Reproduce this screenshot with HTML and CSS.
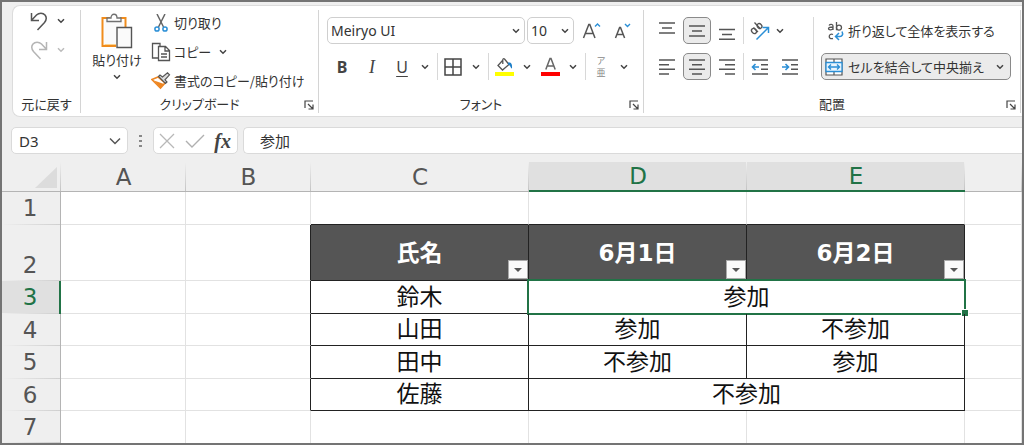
FILE: index.html
```html
<!DOCTYPE html>
<html lang="ja">
<head>
<meta charset="utf-8">
<title>参加表</title>
<link rel="stylesheet" href="styles.css">
</head>
<body>
<svg class="defs" aria-hidden="true">
  <symbol id="chev" viewBox="0 0 8 6"><path d="M1 1.3 4 4.3 7 1.3" fill="none" stroke="currentColor" stroke-width="1.5"/></symbol>
  <symbol id="launch" viewBox="0 0 10 10"><path d="M1 8V1h8M4 4l5 5M9 4.500V9H4.500" fill="none" stroke="#444" stroke-width="1.200"/></symbol>
</svg>
<main class="app">
  <div class="ribbon">
    <section class="group" aria-label="元に戻す">
      <div class="undo">
        <button class="b" aria-label="元に戻す"><svg width="18" height="20" viewBox="0 0 18 20"><path d="M1.500 2v7.500H9M1.800 9 6.500 4C9 1.500 13 1.500 15 4s1.500 5-.5 7.500L7.500 19" fill="none" stroke="#555" stroke-width="1.500"/></svg></button>
        <button class="b" aria-label="元に戻すの一覧"><svg class="chev"><use href="#chev"/></svg></button>
        <button class="b off" aria-label="やり直し"><svg width="18" height="20" viewBox="0 0 18 20"><path d="M16.500 2v7.500H9M16.200 9 11.500 4C9 1.500 5 1.500 3 4s-1.500 5 .5 7.500L10.500 19" fill="none" stroke="#b5b5b5" stroke-width="1.500"/></svg></button>
        <button class="b off" aria-label="やり直しの一覧"><svg class="chev"><use href="#chev"/></svg></button>
      </div>
      <footer class="foot"><span>元に戻す</span></footer>
    </section>

    <section class="group" aria-label="クリップボード">
      <div class="clip">
        <button class="b paste">
          <svg width="34" height="36" viewBox="0 0 34 36"><path d="M10 5H2.500v28H16M20 5h5.500v9" fill="none" stroke="#f08c1c" stroke-width="2"/><path d="M4.500 7h19v7H16v17H4.500z" fill="#fafafa"/><path d="M4.500 31.500H16" stroke="#fbd28e"/><path d="M7 8.500V5h4c0-5 6-5 6 0h4v3.500z" fill="#fff" stroke="#707070" stroke-width="1.300"/><path d="M17 14.500h14.500v20H17z" fill="#fafafa" stroke="#555" stroke-width="1.400"/></svg>
          <span>貼り付け</span>
          <svg class="chev"><use href="#chev"/></svg>
        </button>
        <div class="cliplist">
          <button class="b row"><svg width="20" height="18" viewBox="0 0 20 18"><path d="M6 0l6.500 13M14 0 7.500 13" fill="none" stroke="#666" stroke-width="1.500"/><circle cx="6" cy="15" r="2.100" fill="none" stroke="#2b8fd6" stroke-width="1.500"/><circle cx="14" cy="15" r="2.100" fill="none" stroke="#2b8fd6" stroke-width="1.500"/></svg><span>切り取り</span></button>
          <div class="row">
            <button class="b row"><svg width="20" height="20" viewBox="0 0 20 20"><path d="M7 16H1.500V1.500H9V4" fill="none" stroke="#555" stroke-width="1.300"/><path d="M7.500 4.500h7l4 4v10h-11zM14 4.500V9h4.500M10 12h6M10 15h6" fill="none" stroke="#555" stroke-width="1.300"/></svg><span>コピー</span></button>
            <button class="b" aria-label="コピーの一覧"><svg class="chev"><use href="#chev"/></svg></button>
          </div>
          <button class="b row"><svg width="20" height="18" viewBox="0 0 20 18"><path d="M7 5 1 7.500 9.500 16l4.500-5z" fill="#fff" stroke="#ee8622" stroke-width="1.600"/><path d="M3 8.500 13 12 9.500 16z" fill="#ee8622"/><path d="M7.500 4.500 9 3l2.500 2L16.500 .8l2 2-4.500 5 2 2.200-1.500 1.500z" fill="#ddd" stroke="#555" stroke-width="1.200"/></svg><span>書式のコピー/貼り付け</span></button>
        </div>
      </div>
      <footer class="foot"><span>クリップボード</span><button class="b launch" aria-label="クリップボードの詳細"><svg width="10" height="10"><use href="#launch"/></svg></button></footer>
    </section>

    <section class="group" aria-label="フォント">
      <div class="font">
        <div class="line">
          <span class="combo"><input class="fname" aria-label="フォント名" value="Meiryo UI"><svg class="chev"><use href="#chev"/></svg></span>
          <span class="combo"><input class="fsize" aria-label="フォント サイズ" value="10"><svg class="chev"><use href="#chev"/></svg></span>
          <button class="b grow" aria-label="フォント サイズの拡大"><svg width="20" height="20" viewBox="0 0 20 20"><path d="M1.500 17 6.800 3.500h1L13 17M3.500 12.500h7.600" fill="none" stroke="#555" stroke-width="1.500"/><path d="M13 5.500 15.500 3 18 5.500" fill="none" stroke="#2b8fd6" stroke-width="1.400"/></svg></button>
          <button class="b grow" aria-label="フォント サイズの縮小"><svg width="20" height="20" viewBox="0 0 20 20"><path d="M2.500 17 6.600 6.500h.9L11.600 17M4 13.500h6.200" fill="none" stroke="#555" stroke-width="1.500"/><path d="M12 3l2.500 2.500L17 3" fill="none" stroke="#2b8fd6" stroke-width="1.400"/></svg></button>
        </div>
        <div class="line tools">
          <button class="b letter bold">B</button>
          <button class="b letter italic">I</button>
          <button class="b letter under">U</button>
          <button class="b" aria-label="下線の一覧"><svg class="chev"><use href="#chev"/></svg></button>
          <i class="sep"></i>
          <button class="b wide" aria-label="罫線"><svg width="18" height="18" viewBox="0 0 18 18"><path d="M1 1h16v16H1zM9 1v16M1 9h16" fill="none" stroke="#444" stroke-width="1.500"/></svg></button>
          <button class="b" aria-label="罫線の一覧"><svg class="chev"><use href="#chev"/></svg></button>
          <i class="sep"></i>
          <button class="b wide" aria-label="塗りつぶしの色"><svg width="19" height="20" viewBox="0 0 19 20"><path d="M8 3 3 8.500l4.500 4.500L14 7.500 9.500 2C8.500 1 7.500 2 7.800 4v3" fill="none" stroke="#555" stroke-width="1.300"/><path d="M13 5.500c3-.5 4.500 1 4 6-1.500 0-1-3-4-4z" fill="#1e7fc8"/><path d="M0 15h19v4H0z" fill="#ff0"/></svg></button>
          <button class="b" aria-label="塗りつぶしの一覧"><svg class="chev"><use href="#chev"/></svg></button>
          <button class="b wide" aria-label="フォントの色"><svg width="19" height="20" viewBox="0 0 19 20"><path d="M4.800 12.500 9 1.500h1l4.200 11M6.300 9h6.400" fill="none" stroke="#666" stroke-width="1.500"/><path d="M0 15h19v4H0z" fill="#f00"/></svg></button>
          <button class="b" aria-label="フォントの色の一覧"><svg class="chev"><use href="#chev"/></svg></button>
          <i class="sep"></i>
          <button class="b wide ruby" aria-label="ふりがな"><span>ア</span><span>亜</span></button>
          <button class="b" aria-label="ふりがなの一覧"><svg class="chev"><use href="#chev"/></svg></button>
        </div>
      </div>
      <footer class="foot"><span>フォント</span><button class="b launch" aria-label="フォントの詳細"><svg width="10" height="10"><use href="#launch"/></svg></button></footer>
    </section>

    <section class="group" aria-label="配置">
      <div class="align">
        <div class="alignset">
          <div class="line">
            <button class="b tog" aria-label="上揃え"><svg width="18" height="18" viewBox="0 0 18 18"><path d="M1 1h16M4 6h10M1 11h16" stroke="#555" stroke-width="1.400"/></svg></button>
            <button class="b tog on" aria-label="上下中央揃え"><svg width="18" height="18" viewBox="0 0 18 18"><path d="M1 4h16M4 9h10M1 14h16" stroke="#555" stroke-width="1.400"/></svg></button>
            <button class="b tog" aria-label="下揃え"><svg width="18" height="18" viewBox="0 0 18 18"><path d="M1 7.500h16M4 12.500h10M1 17.300h16" stroke="#555" stroke-width="1.400"/></svg></button>
            <i class="sep"></i>
            <button class="b tog" aria-label="方向"><svg width="22" height="20" viewBox="0 0 22 20"><g fill="none" stroke="#555" stroke-width="1.300"><ellipse cx="5" cy="10" rx="2.200" ry="2.800" transform="rotate(-45 5 10)"/><path d="M4.500 6.500 9 11M5.500 1.500l6 6.500"/><ellipse cx="10.500" cy="5" rx="2.200" ry="2.600" transform="rotate(-45 10.500 5)"/></g><path d="M7.500 18.500 19 7M13.500 6.500H19.500V12" fill="none" stroke="#2b8fd6" stroke-width="1.500"/></svg></button>
            <button class="b" aria-label="方向の一覧"><svg class="chev"><use href="#chev"/></svg></button>
          </div>
          <div class="line">
            <button class="b tog" aria-label="左揃え"><svg width="18" height="18" viewBox="0 0 18 18"><path d="M1 2h16M1 6.700h10M1 11.300h16M1 16h10" stroke="#555" stroke-width="1.400"/></svg></button>
            <button class="b tog on" aria-label="中央揃え"><svg width="18" height="18" viewBox="0 0 18 18"><path d="M1 2h16M4 6.700h10M1 11.300h16M4 16h10" stroke="#555" stroke-width="1.400"/></svg></button>
            <button class="b tog" aria-label="右揃え"><svg width="18" height="18" viewBox="0 0 18 18"><path d="M1 2h16M7 6.700h10M1 11.300h16M7 16h10" stroke="#555" stroke-width="1.400"/></svg></button>
            <i class="sep"></i>
            <button class="b tog" aria-label="インデントを減らす"><svg width="18" height="18" viewBox="0 0 18 18"><path d="M1 2h16M10 6.700h7M10 11.300h7M1 16h16" stroke="#555" stroke-width="1.400"/><path d="M8 9H1.500M4.500 6l-3 3 3 3" fill="none" stroke="#2b8fd6" stroke-width="1.600"/></svg></button>
            <button class="b tog" aria-label="インデントを増やす"><svg width="18" height="18" viewBox="0 0 18 18"><path d="M1 2h16M10 6.700h7M10 11.300h7M1 16h16" stroke="#555" stroke-width="1.400"/><path d="M1 9h6.500M4.500 6l3 3-3 3" fill="none" stroke="#2b8fd6" stroke-width="1.600"/></svg></button>
          </div>
        </div>
        <div class="wrapset">
          <button class="b wrap"><svg width="18" height="20" viewBox="0 0 18 20"><g fill="none" stroke="#555" stroke-width="1.300"><path d="M2 4.500c1-1.500 4-1.500 4 .5v4M6 6C3 6 1.500 6.500 1.500 7.700S5 9.500 6 7.500M9.500 1v8.300"/><circle cx="12" cy="6.600" r="2.500"/><path d="M6 13.500c-4.500-2-5.500 5.500 0 4"/></g><path d="M15 10.500c1.500 3 0 5-2 5H9M12 12l-3.500 3.500L12 19" fill="none" stroke="#2b8fd6" stroke-width="1.500"/></svg><span>折り返して全体を表示する</span></button>
          <button class="b wrap merge"><svg width="18" height="18" viewBox="0 0 18 18"><path d="M1 1h16v16H1zM9 1v4M9 13v4" fill="#fff" stroke="#555" stroke-width="1.200"/><path d="M1 4.500h16v9H1z" fill="#eaf5fd" stroke="#2b8fd6" stroke-width="1.300"/><path d="M3.500 9h11M6 6.500 3.500 9 6 11.500M12 6.500 14.500 9 12 11.500" fill="none" stroke="#2b8fd6" stroke-width="1.400"/></svg><span>セルを結合して中央揃え</span><svg class="chev"><use href="#chev"/></svg></button>
        </div>
      </div>
      <footer class="foot"><span>配置</span><button class="b launch" aria-label="配置の詳細"><svg width="10" height="10"><use href="#launch"/></svg></button></footer>
    </section>
  </div>

  <div class="formula">
    <span class="box namebox"><input aria-label="名前ボックス" value="D3"><svg width="12" height="8" viewBox="0 0 12 8"><path d="M1 1.500 6 6.500 11 1.500" fill="none" stroke="#555" stroke-width="1.500"/></svg></span>
    <svg class="dots" width="3" height="14" viewBox="0 0 3 14"><path d="M0 1h3v2H0zM0 6h3v2H0zM0 11h3v2H0z" fill="#888"/></svg>
    <span class="box fx">
      <button class="b" aria-label="キャンセル"><svg width="16" height="16" viewBox="0 0 16 16"><path d="M1 1l14 14M15 1 1 15" stroke="#b8b8b8" stroke-width="1.300"/></svg></button>
      <button class="b" aria-label="入力"><svg width="20" height="16" viewBox="0 0 20 16"><path d="M1 8l6 6L19 2" fill="none" stroke="#b0b0b0" stroke-width="1.400"/></svg></button>
      <button class="b fxlabel">fx</button>
    </span>
    <input class="box content" aria-label="数式バー" value="参加">
  </div>

  <table class="sheet">
    <colgroup><col class="c-head"><col class="c-s"><col class="c-s"><col class="c-l"><col class="c-l"><col class="c-l"><col></colgroup>
    <thead>
      <tr><th class="corner"><svg width="22" height="21" viewBox="0 0 22 21"><path d="M22 0v21H0z" fill="#dcdcdc"/></svg></th><th>A</th><th>B</th><th>C</th><th class="sel">D</th><th class="sel">E</th><th></th></tr>
    </thead>
    <tbody>
      <tr class="tall"><th>1</th><td></td><td></td><td class="kb"></td><td class="kb"></td><td class="kb"></td><td></td></tr>
      <tr class="title"><th>2</th><td></td><td class="kr"></td>
        <td class="dark">氏名<button class="b filter" aria-label="氏名の絞り込み"></button></td>
        <td class="dark">6月1日<button class="b filter" aria-label="6月1日の絞り込み"></button></td>
        <td class="dark">6月2日<button class="b filter" aria-label="6月2日の絞り込み"></button></td><td></td></tr>
      <tr class="tall"><th class="selrow">3</th><td></td><td class="kr"></td><td class="k">鈴木</td><td class="k active" colspan="2">参加</td><td></td></tr>
      <tr><th>4</th><td></td><td class="kr"></td><td class="k">山田</td><td class="k">参加</td><td class="k">不参加</td><td></td></tr>
      <tr class="tall"><th>5</th><td></td><td class="kr"></td><td class="k">田中</td><td class="k">不参加</td><td class="k">参加</td><td></td></tr>
      <tr><th>6</th><td></td><td class="kr"></td><td class="k">佐藤</td><td class="k" colspan="2">不参加</td><td></td></tr>
      <tr class="last"><th>7</th><td></td><td></td><td></td><td></td><td></td><td></td></tr>
    </tbody>
  </table>
</main>
</body>
</html>
```

FILE: styles.css
```css
* { box-sizing: border-box; }
body { margin: 0; background: #efefef; color: #333; font: 14px/20px "Noto Sans", "Noto Sans CJK JP", sans-serif; }
.defs { position: absolute; width: 0; height: 0; }
svg { display: block; flex: none; }
.app { border: 2px solid #747474; background: #efefef; overflow: hidden; }
.b { display: flex; align-items: center; justify-content: center; margin: 0; padding: 0; border: 0; background: none; color: inherit; font: inherit; white-space: nowrap; }
.chev { width: 8px; height: 6px; color: #444; }
.off .chev { color: #bbb; }
input { border: 0; background: none; color: inherit; font: inherit; padding: 0; min-width: 0; outline: 0; }

.ribbon { display: grid; grid-template-columns: minmax(68px, 68fr) minmax(238px, 238fr) minmax(325px, 325fr) minmax(377px, 377fr); margin: 3px 0 0 10px; padding-right: 1px; height: 112px; border: 1px solid #dcdcdc; border-right: 0; border-radius: 8px 0 0 8px; background: #fff; font: 13px/18px "Noto Sans CJK JP", sans-serif; font-feature-settings: "palt"; }
.group { display: flex; flex-direction: column; justify-content: space-between; margin: 4px 0 3px; border-right: 1px solid #d4d4d4; }
.foot { position: relative; display: flex; justify-content: center; height: 18px; line-height: 18px; }
.launch { position: absolute; right: 4px; bottom: 3px; }
.undo { display: grid; grid-template-columns: 18px 8px; column-gap: 9px; row-gap: 9px; padding: 1px 0 0 17px; }

.clip { display: flex; gap: 8px; padding: 3px 0 0 10px; }
.paste { flex-direction: column; justify-content: flex-start; gap: 2px; width: 52px; line-height: 18px; }
.paste .chev { margin-top: 3px; }
.cliplist { display: flex; flex-direction: column; align-items: flex-start; gap: 9px; }
.row { display: flex; align-items: center; gap: 3px; height: 20px; }
.cliplist > div { gap: 8px; }

.font { display: flex; flex-direction: column; gap: 9px; padding: 7px 0 0 8px; }
.line { display: flex; align-items: center; }
.combo { display: flex; align-items: center; height: 27px; margin-right: 2px; padding: 0 4px 0 3px; border: 1px solid #cfcfcf; border-radius: 5px; font: 14px/20px "Noto Sans", sans-serif; }
.fname { width: 181px; }
.fsize { width: 30px; }
.grow { width: 31px; }
.tools { height: 27px; }
.letter { width: 30px; font: 16px/20px "Noto Sans", sans-serif; color: #444; }
.bold { font-weight: 700; }
.italic { font-family: "Liberation Serif", serif; font-style: italic; font-size: 18px; }
.under { text-decoration: underline; text-underline-offset: 3px; }
.tools .wide { width: 30px; }
.tools .chev { margin: 0 4px; }
.sep { width: 1px; height: 27px; margin-left: 4px; background: #d8d8d8; }
.ruby { flex-direction: column; font-size: 9px; line-height: 12px; color: #888; }

.align { display: flex; gap: 7px; padding: 7px 9px 0 9px; }
.alignset, .wrapset { display: flex; flex-direction: column; gap: 9px; }
.alignset { width: 161px; border-right: 1px solid #d8d8d8; }
.alignset .sep { margin: 0 2px 0 0; }
.tog { width: 28px; height: 27px; margin-right: 2px; border-radius: 5px; }
.on, .merge { border: 1px solid #8a8a8a; background: #ebebeb; }
.wrapset { flex: 1; }
.wrap { justify-content: flex-start; gap: 3px; height: 27px; padding: 0 6px; }
.merge { padding-left: 3px; gap: 5px; border-radius: 5px; }
.merge .chev { margin-left: auto; }

.formula { display: flex; align-items: center; margin: 10px 0 8px 9px; }
.box { display: flex; align-items: center; height: 27px; border: 1px solid #dadada; border-radius: 5px; background: #fff; }
.namebox { width: 117px; justify-content: space-between; padding: 0 6px 0 7px; font-size: 15px; }
.namebox input { width: 60px; }
.dots { margin: 0 11px 0 11px; }
.fx { width: 85px; justify-content: space-between; padding: 0 6px 0 5px; margin-right: 5px; }
.fxlabel { font: italic 700 20px/24px "Liberation Serif", serif; color: #444; }
.content { flex: 1; padding-left: 16px; border-right: 0; border-radius: 5px 0 0 5px; font: 15px/20px "Noto Sans CJK JP", sans-serif; }

.sheet { width: 100%; table-layout: fixed; border-collapse: separate; border-spacing: 0; background: #fff; font-size: 23px; line-height: 27px; color: #111; }
.c-head { width: 59px; }
.c-s { width: 125px; }
.c-l { width: 218px; }
.sheet th, .sheet td { padding: 0 0 4px; height: 32px; text-align: center; font-weight: 400; border-right: 1px solid #e2e2e2; border-bottom: 1px solid #e2e2e2; }
.sheet th { padding-bottom: 0; color: #555; font-family: "DejaVu Sans", sans-serif; }
.sheet td { font-family: "Noto Sans CJK JP", sans-serif; }
.sheet thead th { height: 30px; padding-top: 2px; border-right: 0; border-bottom: 1px solid #b4b4b4; background: linear-gradient(#efefef, #c4c4c4) right / 1px 100% no-repeat #efefef; }
.sheet thead .sel { padding-top: 1px; border-bottom: 2px solid #217346; background-color: #e0e0e0; color: #217346; }
.sheet .corner svg { margin: 0 4px 0 auto; }
.sheet tbody th { padding-right: 2px; border-right: 1px solid #b4b4b4; border-bottom: 0; background: linear-gradient(90deg, #efefef, #cfcfcf) bottom / 100% 1px no-repeat #efefef; }
.sheet tbody .selrow { padding-right: 1px; border-right: 2px solid #217346; background-color: #e0e0e0; color: #217346; }
.sheet .tall > * { height: 33px; }
.sheet .title > * { height: 56px; }
.sheet .title th { vertical-align: bottom; padding-bottom: 2px; }
.sheet .kb { border-bottom-color: #222; }
.sheet .kr { border-right-color: #222; }
.sheet .k, .sheet .dark { position: relative; border-color: #222; }
.sheet .dark { padding: 2px 0 0; background: #555; color: #fff; font-family: "DejaVu Sans", "Noto Sans CJK JP", sans-serif; font-weight: 700; }
.filter { position: absolute; right: 0; bottom: 1px; width: 20px; height: 19px; border: 1px solid #aaa; background: #fafafa; }
.filter::after { content: ""; border: 4px solid transparent; border-top-color: #555; border-bottom: 0; }
.active::before { content: ""; position: absolute; inset: -2px; border: 2px solid #217346; }
.active::after { content: ""; position: absolute; right: -4px; bottom: -3px; width: 6px; height: 6px; background: #217346; box-shadow: 0 0 0 1px #fff; }
.sheet .last > * { border-bottom: 0; }
```
